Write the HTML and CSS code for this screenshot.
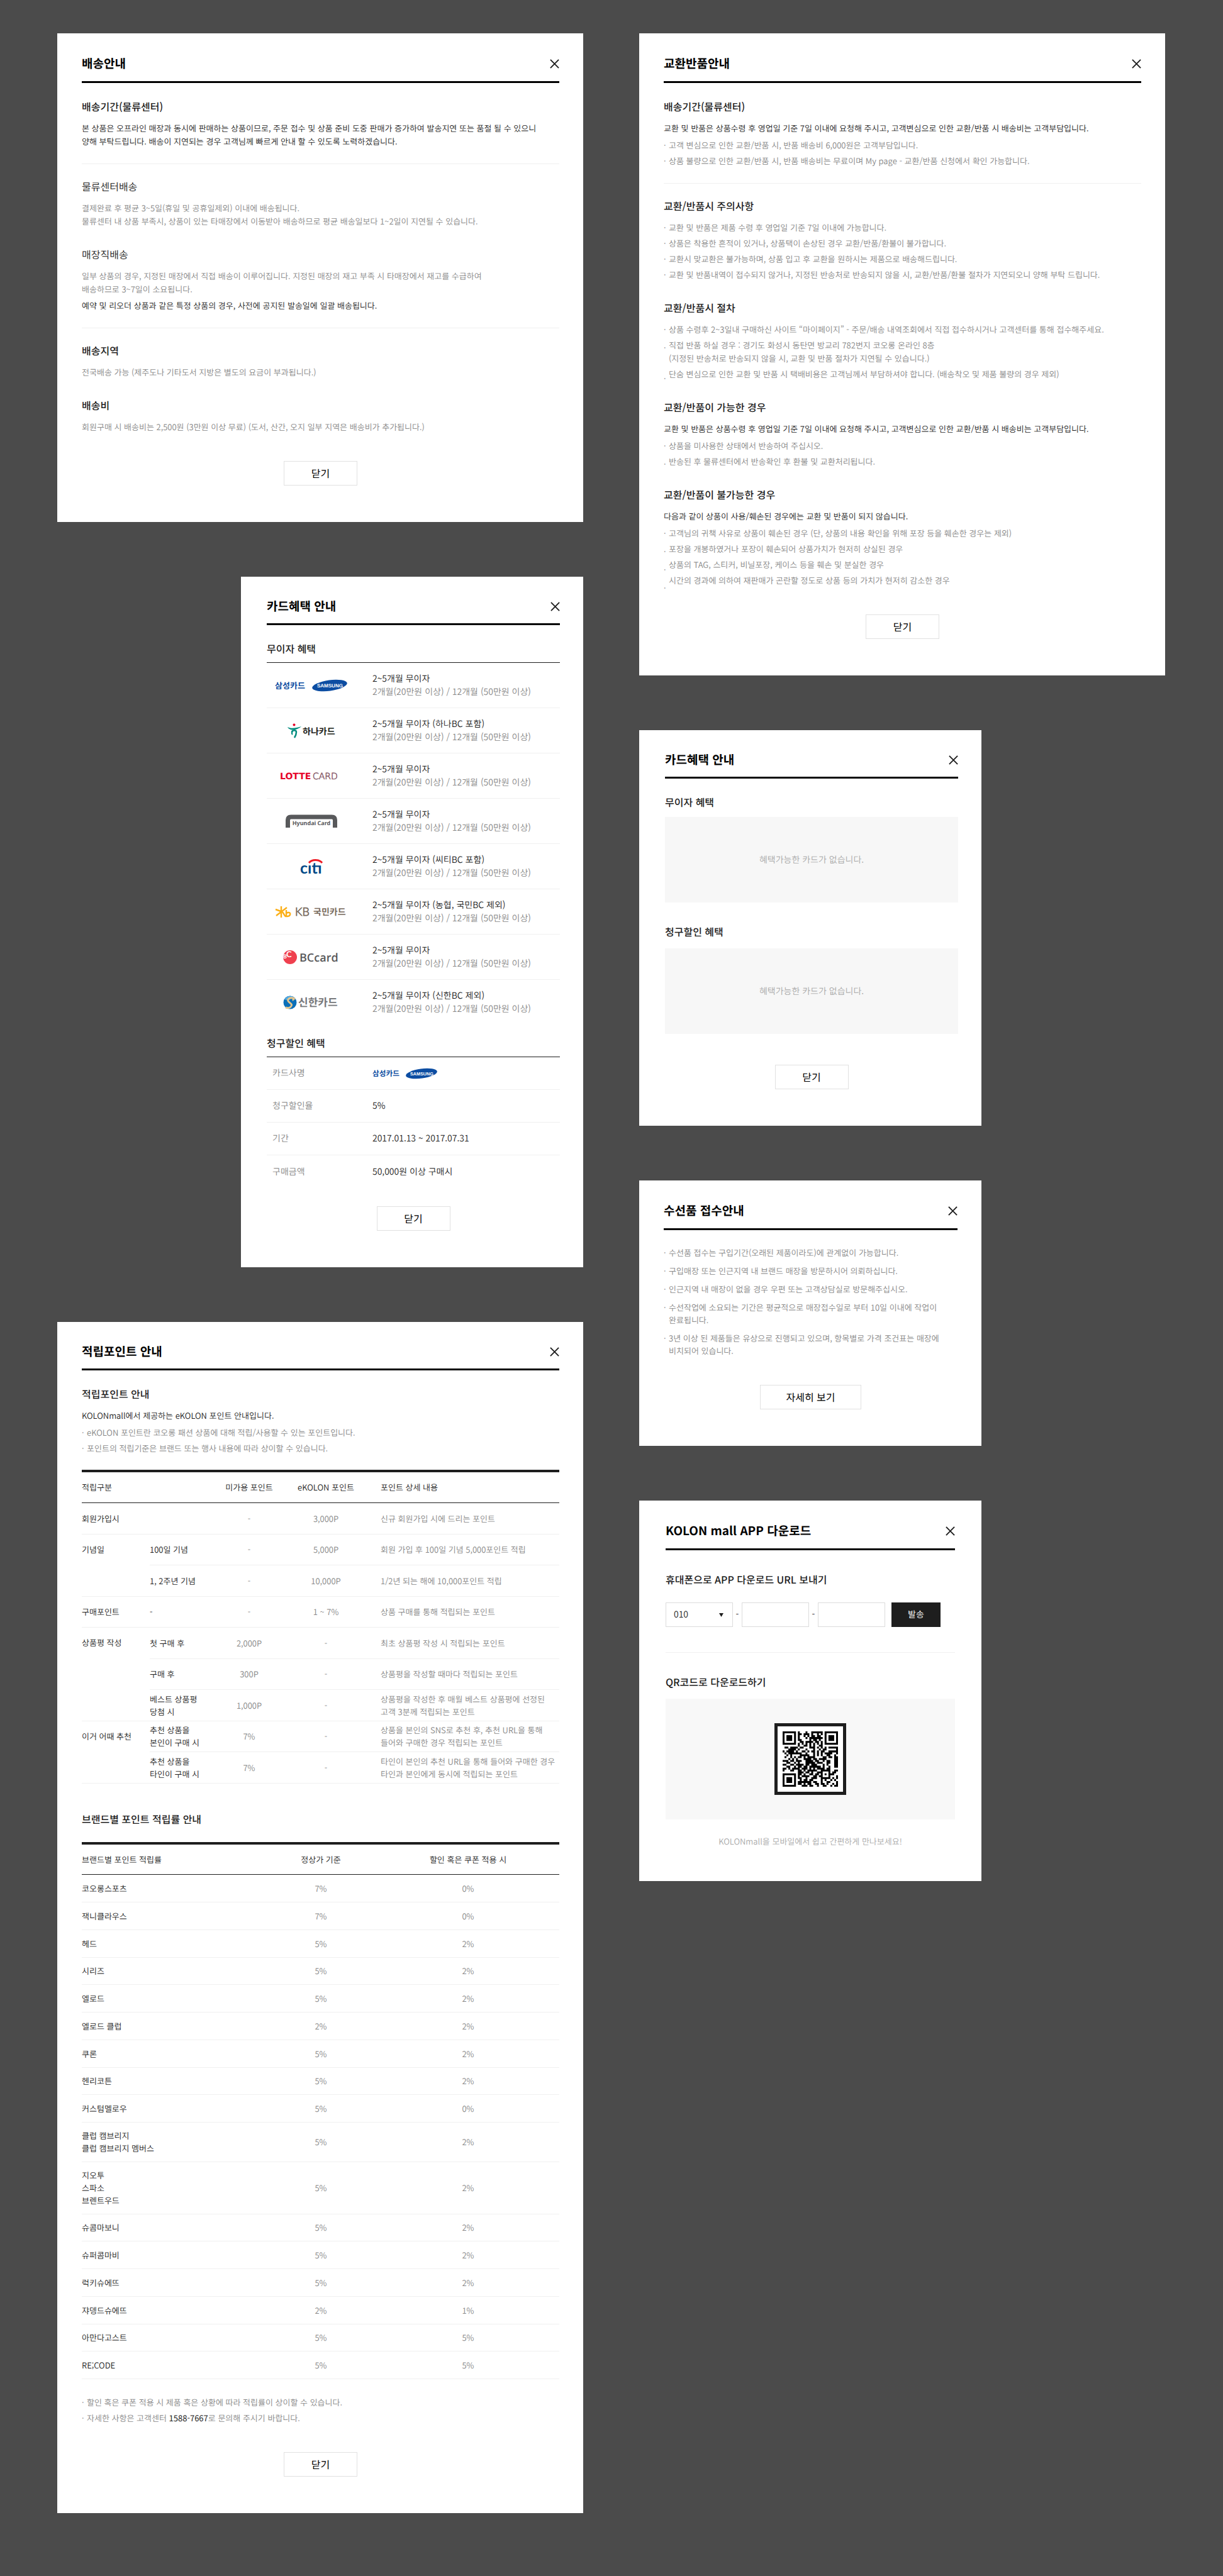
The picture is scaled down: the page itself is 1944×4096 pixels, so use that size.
FILE: index.html
```html
<!DOCTYPE html>
<html lang="ko">
<head>
<meta charset="utf-8">
<meta name="viewport" content="width=device-width, initial-scale=1">
<title>KOLON mall 안내 팝업</title>
<link rel="stylesheet" href="styles.css">
</head>
<body>
<svg class="defs" aria-hidden="true">
  <symbol id="icon-close" viewBox="0 0 16 16"><path d="M1 1l14 14M15 1L1 15" fill="none" stroke="#1e1e1e" stroke-width="2"/></symbol>
  <symbol id="logo-samsung" viewBox="0 0 116 24">
    <text x="0" y="17" font-family="Noto Sans CJK KR, sans-serif" font-weight="700" font-size="13" fill="#0c4da2">삼성카드</text>
    <ellipse cx="87" cy="12" rx="28" ry="8.500" transform="rotate(-8 87 12)" fill="#0c4da2"/>
    <text x="67" y="15" font-family="Liberation Sans, sans-serif" font-weight="700" font-size="8" fill="#fff">SAMSUNG</text>
  </symbol>
</svg>
<main class="page">
  <div class="column">

    <section class="card">
      <header class="card-head"><h2>배송안내</h2><button class="close" type="button" aria-label="배송안내 닫기"><svg><use href="#icon-close"/></svg></button></header>
      <h3>배송기간(물류센터)</h3>
      <p class="strong">본 상품은 오프라인 매장과 동시에 판매하는 상품이므로, 주문 접수 및 상품 준비 도중 판매가 증가하여 발송지연 또는 품절 될 수 있으니<br>양해 부탁드립니다. 배송이 지연되는 경우 고객님께 빠르게 안내 할 수 있도록 노력하겠습니다.</p>
      <hr>
      <h4>물류센터배송</h4>
      <p>결제완료 후 평균 3~5일(휴일 및 공휴일제외) 이내에 배송됩니다.<br>물류센터 내 상품 부족시, 상품이 있는 타매장에서 이동받아 배송하므로 평균 배송일보다 1~2일이 지연될 수 있습니다.</p>
      <h4>매장직배송</h4>
      <p>일부 상품의 경우, 지정된 매장에서 직접 배송이 이루어집니다. 지정된 매장의 재고 부족 시 타매장에서 재고를 수급하여<br>배송하므로 3~7일이 소요됩니다.</p>
      <p class="strong">예약 및 리오더 상품과 같은 특정 상품의 경우, 사전에 공지된 발송일에 일괄 배송됩니다.</p>
      <hr>
      <h3>배송지역</h3>
      <p>전국배송 가능 (제주도나 기타도서 지방은 별도의 요금이 부과됩니다.)</p>
      <h3>배송비</h3>
      <p>회원구매 시 배송비는 2,500원 (3만원 이상 무료) (도서, 산간, 오지 일부 지역은 배송비가 추가됩니다.)</p>
      <div class="actions"><button class="btn" type="button">닫기</button></div>
    </section>

    <section class="card narrow compact">
      <header class="card-head"><h2>카드혜택 안내</h2><button class="close" type="button" aria-label="카드혜택 안내 닫기"><svg><use href="#icon-close"/></svg></button></header>
      <h3>무이자 혜택</h3>
      <table class="benefit">
        <tr><th scope="row"><svg class="logo" role="img" aria-label="삼성카드" viewBox="0 0 116 24"><use href="#logo-samsung"/></svg></th><td>2~5개월 무이자<small>2개월(20만원 이상) / 12개월 (50만원 이상)</small></td></tr>
        <tr><th scope="row"><svg class="logo" role="img" aria-label="하나카드" viewBox="0 0 116 24">
          <circle cx="30.500" cy="2.500" r="2" fill="#e4002b"/>
          <path d="M20 6c5 3 13 2 22-1c-4 4-11 6-15 5.500c-3-.300-6-2-7-4.500z" fill="#008c7e"/>
          <path d="M27 14c0-3 7-4 7 0c0 4-1 6-3 9" fill="none" stroke="#008c7e" stroke-width="2.500"/>
          <path d="M28 13c-2 2-1 4 0 5" fill="none" stroke="#008c7e" stroke-width="2"/>
          <text x="44" y="18" font-family="Noto Sans CJK KR, sans-serif" font-weight="700" font-size="14" fill="#231f20">하나카드</text></svg></th><td>2~5개월 무이자 (하나BC 포함)<small>2개월(20만원 이상) / 12개월 (50만원 이상)</small></td></tr>
        <tr><th scope="row"><svg class="logo" role="img" aria-label="LOTTE CARD" viewBox="0 0 116 24">
          <text x="8" y="17" font-family="DejaVu Sans, sans-serif" font-weight="700" font-size="14" fill="#e60027">LOTTE</text>
          <text x="60" y="17" font-family="DejaVu Sans, sans-serif" font-size="14" fill="#8a5f6d" stroke="#8a5f6d" stroke-width=".600">CARD</text></svg></th><td>2~5개월 무이자<small>2개월(20만원 이상) / 12개월 (50만원 이상)</small></td></tr>
        <tr><th scope="row"><svg class="logo" role="img" aria-label="Hyundai Card" viewBox="0 0 116 24">
          <path d="M20.500 22V10q0-5 5-5h65q5 0 5 5V22" fill="none" stroke="#58595b" stroke-width="7"/>
          <text x="58" y="18" text-anchor="middle" font-family="Noto Sans, sans-serif" font-weight="700" font-size="9" fill="#58595b">Hyundai Card</text></svg></th><td>2~5개월 무이자<small>2개월(20만원 이상) / 12개월 (50만원 이상)</small></td></tr>
        <tr><th scope="row"><svg class="logo" role="img" aria-label="citi" viewBox="0 0 116 24">
          <text x="40" y="23" font-family="Lato, sans-serif" font-weight="700" font-size="25" fill="#004a87">cıtı</text>
          <path d="M54 6c5-6 16-6 21 0" fill="none" stroke="#ee1c25" stroke-width="3"/></svg></th><td>2~5개월 무이자 (씨티BC 포함)<small>2개월(20만원 이상) / 12개월 (50만원 이상)</small></td></tr>
        <tr><th scope="row"><svg class="logo" role="img" aria-label="KB 국민카드" viewBox="0 0 116 24">
          <path d="M1 8l11 4M10 3v18M19 5L2 18M11 12c3 0 3 6 6 7h3c5 0 6-7 1-6l-4 1M18 9v9" fill="none" stroke="#fbaf17" stroke-width="2.400"/>
          <text x="32" y="18" font-family="Lato, sans-serif" font-size="18" fill="#7a6c60" stroke="#7a6c60" stroke-width=".800">KB</text>
          <text x="61" y="17" font-family="Noto Sans CJK KR, sans-serif" font-weight="700" font-size="14" fill="#7a6c60">국민카드</text></svg></th><td>2~5개월 무이자 (농협, 국민BC 제외)<small>2개월(20만원 이상) / 12개월 (50만원 이상)</small></td></tr>
        <tr><th scope="row"><svg class="logo" role="img" aria-label="BC card" viewBox="0 0 116 24">
          <circle cx="24" cy="12" r="11" fill="#ef404f"/>
          <text x="13" y="14" font-family="Lato, sans-serif" font-weight="700" font-size="9" fill="#fff">B</text>
          <text x="18" y="12" font-family="Lato, sans-serif" font-weight="700" font-size="13" fill="#fff">C</text>
          <text x="39" y="19" font-family="Open Sans, sans-serif" font-weight="600" font-size="18" fill="#58595b">BCcard</text></svg></th><td>2~5개월 무이자<small>2개월(20만원 이상) / 12개월 (50만원 이상)</small></td></tr>
        <tr><th scope="row"><svg class="logo" role="img" aria-label="신한카드" viewBox="0 0 116 24">
          <circle cx="24" cy="12" r="10.500" fill="#0b6fb8"/><path d="M15 7a10.500 10.500 0 0 1 14-4l-8 6z" fill="#54a9df"/>
          <path d="M31 6c-7-3-13 1-9 5c3 3 7 4 3 8c-2 2-5 2-8 1" fill="none" stroke="#e3c58d" stroke-width="3"/>
          <path d="M27 3l6 3l-5 4z" fill="#e3c58d"/>
          <text x="37" y="18" font-family="Noto Sans CJK KR, sans-serif" font-weight="700" font-size="17" fill="#77787b">신한카드</text></svg></th><td>2~5개월 무이자 (신한BC 제외)<small>2개월(20만원 이상) / 12개월 (50만원 이상)</small></td></tr>
      </table>
      <h3>청구할인 혜택</h3>
      <table class="benefit discount">
        <tr><th scope="row">카드사명</th><td><svg class="logo small" role="img" aria-label="삼성카드" viewBox="0 0 116 24"><use href="#logo-samsung"/></svg></td></tr>
        <tr><th scope="row">청구할인율</th><td>5%</td></tr>
        <tr><th scope="row">기간</th><td>2017.01.13 ~ 2017.07.31</td></tr>
        <tr><th scope="row">구매금액</th><td>50,000원 이상 구매시</td></tr>
      </table>
      <div class="actions"><button class="btn" type="button">닫기</button></div>
    </section>

    <section class="card compact">
      <header class="card-head"><h2>적립포인트 안내</h2><button class="close" type="button" aria-label="적립포인트 안내 닫기"><svg><use href="#icon-close"/></svg></button></header>
      <h3>적립포인트 안내</h3>
      <p class="strong">KOLONmall에서 제공하는 eKOLON 포인트 안내입니다.</p>
      <ul class="notes">
        <li>eKOLON 포인트란 코오롱 패션 상품에 대해 적립/사용할 수 있는 포인트입니다.</li>
        <li>포인트의 적립기준은 브랜드 또는 행사 내용에 따라 상이할 수 있습니다.</li>
      </ul>
      <table class="grid points">
        <colgroup><col class="c-group"><col class="c-case"><col class="c-point"><col class="c-point"><col></colgroup>
        <thead><tr><th colspan="2" scope="col">적립구분</th><th scope="col" class="num">미가용 포인트</th><th scope="col" class="num">eKOLON 포인트</th><th scope="col" class="desc">포인트 상세 내용</th></tr></thead>
        <tbody>
          <tr><th colspan="2" scope="row">회원가입시</th><td class="num">-</td><td class="num">3,000P</td><td class="desc">신규 회원가입 시에 드리는 포인트</td></tr>
          <tr><th rowspan="2" scope="rowgroup" class="group">기념일</th><th scope="row">100일 기념</th><td class="num">-</td><td class="num">5,000P</td><td class="desc">회원 가입 후 100일 기념 5,000포인트 적립</td></tr>
          <tr><th scope="row">1, 2주년 기념</th><td class="num">-</td><td class="num">10,000P</td><td class="desc">1/2년 되는 해에 10,000포인트 적립</td></tr>
          <tr><th scope="row">구매포인트</th><th>-</th><td class="num">-</td><td class="num">1 ~ 7%</td><td class="desc">상품 구매를 통해 적립되는 포인트</td></tr>
          <tr><th rowspan="3" scope="rowgroup" class="group">상품평 작성</th><th scope="row">첫 구매 후</th><td class="num">2,000P</td><td class="num">-</td><td class="desc">최초 상품평 작성 시 적립되는 포인트</td></tr>
          <tr><th scope="row">구매 후</th><td class="num">300P</td><td class="num">-</td><td class="desc">상품평을 작성할 때마다 적립되는 포인트</td></tr>
          <tr><th scope="row">베스트 상품평<br>당첨 시</th><td class="num">1,000P</td><td class="num">-</td><td class="desc">상품평을 작성한 후 매월 베스트 상품평에 선정된<br>고객 3분께 적립되는 포인트</td></tr>
          <tr><th rowspan="2" scope="rowgroup" class="group">이거 어때 추천</th><th scope="row">추천 상품을<br>본인이 구매 시</th><td class="num">7%</td><td class="num">-</td><td class="desc">상품을 본인의 SNS로 추천 후, 추천 URL을 통해<br>들어와 구매한 경우 적립되는 포인트</td></tr>
          <tr><th scope="row">추천 상품을<br>타인이 구매 시</th><td class="num">7%</td><td class="num">-</td><td class="desc">타인이 본인의 추천 URL을 통해 들어와 구매한 경우<br>타인과 본인에게 동시에 적립되는 포인트</td></tr>
        </tbody>
      </table>
      <h3>브랜드별 포인트 적립률 안내</h3>
      <table class="grid rates">
        <colgroup><col class="c-brand"><col class="c-rate"><col></colgroup>
        <thead><tr><th scope="col">브랜드별 포인트 적립률</th><th scope="col" class="num">정상가 기준</th><th scope="col" class="num last">할인 혹은 쿠폰 적용 시</th></tr></thead>
        <tbody>
          <tr><th scope="row">코오롱스포츠</th><td class="num">7%</td><td class="num last">0%</td></tr>
          <tr><th scope="row">잭니클라우스</th><td class="num">7%</td><td class="num last">0%</td></tr>
          <tr><th scope="row">헤드</th><td class="num">5%</td><td class="num last">2%</td></tr>
          <tr><th scope="row">시리즈</th><td class="num">5%</td><td class="num last">2%</td></tr>
          <tr><th scope="row">엘로드</th><td class="num">5%</td><td class="num last">2%</td></tr>
          <tr><th scope="row">엘로드 클럽</th><td class="num">2%</td><td class="num last">2%</td></tr>
          <tr><th scope="row">쿠론</th><td class="num">5%</td><td class="num last">2%</td></tr>
          <tr><th scope="row">헨리코튼</th><td class="num">5%</td><td class="num last">2%</td></tr>
          <tr><th scope="row">커스텀멜로우</th><td class="num">5%</td><td class="num last">0%</td></tr>
          <tr class="multi"><th scope="row">클럽 캠브리지<br>클럽 캠브리지 멤버스</th><td class="num">5%</td><td class="num last">2%</td></tr>
          <tr class="multi"><th scope="row">지오투<br>스파소<br>브렌트우드</th><td class="num">5%</td><td class="num last">2%</td></tr>
          <tr><th scope="row">슈콤마보니</th><td class="num">5%</td><td class="num last">2%</td></tr>
          <tr><th scope="row">슈퍼콤마비</th><td class="num">5%</td><td class="num last">2%</td></tr>
          <tr><th scope="row">럭키슈에뜨</th><td class="num">5%</td><td class="num last">2%</td></tr>
          <tr><th scope="row">쟈뎅드슈에뜨</th><td class="num">2%</td><td class="num last">1%</td></tr>
          <tr><th scope="row">아만다고스트</th><td class="num">5%</td><td class="num last">5%</td></tr>
          <tr><th scope="row">RE;CODE</th><td class="num">5%</td><td class="num last">5%</td></tr>
        </tbody>
      </table>
      <ul class="notes foot">
        <li>할인 혹은 쿠폰 적용 시 제품 혹은 상황에 따라 적립률이 상이할 수 있습니다.</li>
        <li>자세한 사항은 고객센터 <b>1588-7667</b>로 문의해 주시기 바랍니다.</li>
      </ul>
      <div class="actions"><button class="btn" type="button">닫기</button></div>
    </section>
  </div>

  <div class="column right">

    <section class="card">
      <header class="card-head"><h2>교환반품안내</h2><button class="close" type="button" aria-label="교환반품안내 닫기"><svg><use href="#icon-close"/></svg></button></header>
      <h3>배송기간(물류센터)</h3>
      <p class="strong">교환 및 반품은 상품수령 후 영업일 기준 7일 이내에 요청해 주시고, 고객변심으로 인한 교환/반품 시 배송비는 고객부담입니다.</p>
      <ul class="notes">
        <li>고객 변심으로 인한 교환/반품 시, 반품 배송비 6,000원은 고객부담입니다.</li>
        <li>상품 불량으로 인한 교환/반품 시, 반품 배송비는 무료이며 My page - 교환/반품 신청에서 확인 가능합니다.</li>
      </ul>
      <hr>
      <h3>교환/반품시 주의사항</h3>
      <ul class="notes first">
        <li>교환 및 반품은 제품 수령 후 영업일 기준 7일 이내에 가능합니다.</li>
        <li>상품은 착용한 흔적이 있거나, 상품택이 손상된 경우 교환/반품/환불이 불가합니다.</li>
        <li>교환시 맞교환은 불가능하며, 상품 입고 후 교환을 원하시는 제품으로 배송해드립니다.</li>
        <li>교환 및 반품내역이 접수되지 않거나, 지정된 반송처로 반송되지 않을 시, 교환/반품/환불 절차가 지연되오니 양해 부탁 드립니다.</li>
      </ul>
      <h3>교환/반품시 절차</h3>
      <div class="marked first">
        <div class="marks" aria-hidden="true"><span>·</span><span>·</span><span class="skip">·</span></div>
        <ul class="notes plain">
          <li>상품 수령후 2~3일내 구매하신 사이트 “마이페이지” - 주문/배송 내역조회에서 직접 접수하시거나 고객센터를 통해 접수해주세요.</li>
          <li>직접 반품 하실 경우 : 경기도 화성시 동탄면 방교리 782번지 코오롱 온라인 8층<br>(지정된 반송처로 반송되지 않을 시, 교환 및 반품 절차가 지연될 수 있습니다.)</li>
          <li>단숨 변심으로 인한 교환 및 반품 시 택배비용은 고객님께서 부담하셔야 합니다. (배송착오 및 제품 불량의 경우 제외)</li>
        </ul>
      </div>
      <h3>교환/반품이 가능한 경우</h3>
      <p class="strong">교환 및 반품은 상품수령 후 영업일 기준 7일 이내에 요청해 주시고, 고객변심으로 인한 교환/반품 시 배송비는 고객부담입니다.</p>
      <div class="marked">
        <div class="marks" aria-hidden="true"><span>·</span><span>·</span></div>
        <ul class="notes plain">
          <li>상품을 미사용한 상태에서 반송하여 주십시오.</li>
          <li>반송된 후 물류센터에서 반송확인 후 환불 및 교환처리됩니다.</li>
        </ul>
      </div>
      <h3>교환/반품이 불가능한 경우</h3>
      <p class="strong">다음과 같이 상품이 사용/훼손된 경우에는 교환 및 반품이 되지 않습니다.</p>
      <div class="marked">
        <div class="marks" aria-hidden="true"><span>·</span><span>·</span><span>·</span><span>·</span></div>
        <ul class="notes plain">
          <li>고객님의 귀책 사유로 상품이 훼손된 경우 (단, 상품의 내용 확인을 위해 포장 등을 훼손한 경우는 제외)</li>
          <li>포장을 개봉하였거나 포장이 훼손되어 상품가치가 현저히 상실된 경우</li>
          <li>상품의 TAG, 스티커, 비닐포장, 케이스 등을 훼손 및 분실한 경우</li>
          <li>시간의 경과에 의하여 재판매가 곤란할 정도로 상품 등의 가치가 현저히 감소한 경우</li>
        </ul>
      </div>
      <div class="actions"><button class="btn" type="button">닫기</button></div>
    </section>

    <section class="card narrow compact">
      <header class="card-head"><h2>카드혜택 안내</h2><button class="close" type="button" aria-label="카드혜택 안내 닫기"><svg><use href="#icon-close"/></svg></button></header>
      <h3>무이자 혜택</h3>
      <p class="empty">혜택가능한 카드가 없습니다.</p>
      <h3>청구할인 혜택</h3>
      <p class="empty">혜택가능한 카드가 없습니다.</p>
      <div class="actions"><button class="btn" type="button">닫기</button></div>
    </section>

    <section class="card narrow repair">
      <header class="card-head"><h2>수선품 접수안내</h2><button class="close" type="button" aria-label="수선품 접수안내 닫기"><svg><use href="#icon-close"/></svg></button></header>
      <ul class="notes loose">
        <li>수선품 접수는 구입기간(오래된 제품이라도)에 관계없이 가능합니다.</li>
        <li>구입매장 또는 인근지역 내 브랜드 매장을 방문하시어 의뢰하십니다.</li>
        <li>인근지역 내 매장이 없을 경우 우편 또는 고객상담실로 방문해주십시오.</li>
        <li>수선작업에 소요되는 기간은 평균적으로 매장접수일로 부터 10일 이내에 작업이<br>완료됩니다.</li>
        <li>3년 이상 된 제품들은 유상으로 진행되고 있으며, 항목별로 가격 조건표는 매장에<br>비치되어 있습니다.</li>
      </ul>
      <div class="actions"><button class="btn wide" type="button">자세히 보기</button></div>
    </section>

    <section class="card narrow app">
      <header class="card-head"><h2>KOLON mall APP 다운로드</h2><button class="close" type="button" aria-label="APP 다운로드 닫기"><svg><use href="#icon-close"/></svg></button></header>
      <h3>휴대폰으로 APP 다운로드 URL 보내기</h3>
      <form class="phone">
        <div class="select">
          <select aria-label="휴대폰 앞자리"><option>010</option></select>
          <svg viewBox="0 0 7 6" aria-hidden="true"><path d="M0 0h7L3.500 6z" fill="#1e1e1e"/></svg>
        </div>
        <span>-</span>
        <input type="tel" aria-label="휴대폰 가운데 자리">
        <span>-</span>
        <input type="tel" aria-label="휴대폰 끝자리">
        <button class="send" type="button">발송</button>
      </form>
      <hr>
      <h3>QR코드로 다운로드하기</h3>
      <div class="qr-box"><svg class="qr" role="img" aria-label="앱 다운로드 QR코드" viewBox="0 0 29 29" shape-rendering="geometricPrecision"></svg></div>
      <p class="hint">KOLONmall을 모바일에서 쉽고 간편하게 만나보세요!</p>
    </section>
  </div>
</main>
<script src="qr.js"></script>
</body>
</html>
```

FILE: styles.css
```css
* { box-sizing: border-box; }

body {
  margin: 0;
  background: #4b4b4b;
  color: #1e1e1e;
  font: 350 13px/21px "Noto Sans CJK KR", sans-serif;
  text-rendering: geometricPrecision;
}

h2, h3, h4, p, ul, table { margin: 0; padding: 0; }
ul { list-style: none; }
button, input, select { font: inherit; color: inherit; border-radius: 0; text-rendering: inherit; }
.defs { display: none; }

.page {
  display: grid;
  grid-template-columns: minmax(0, 1fr) minmax(0, 1fr);
  column-gap: 89px;
  padding: 53px 92px 98px 91px;
}
.column { display: flex; flex-direction: column; align-items: flex-end; gap: 87px; }
.right { align-items: flex-start; }

/* cards */
.card {
  width: 100%;
  padding: 34px 38px 58px 39px;
  background: #fff;
  white-space: nowrap;
}
.narrow { max-width: 544px; }
.compact { padding-top: 33px; }
.narrow.compact { padding-left: 41px; padding-right: 37px; font-size: 14px; }

.card-head {
  display: flex;
  justify-content: space-between;
  align-items: center;
  padding-bottom: 14px;
  border-bottom: 3px solid #000;
  margin-bottom: 26px;
}
.compact .card-head { padding-bottom: 13px; }
h2 { font-size: 19px; line-height: 28px; font-weight: 700; color: #000; }
h3, h4 { margin-top: 31px; font-size: 16px; line-height: 23px; font-weight: 500; }
h4 { font-weight: 350; }
.card-head + h3 { margin-top: 0; }
.close { width: 15px; height: 15px; padding: 0; border: 0; background: none; display: flex; cursor: pointer; }
.close svg { width: 15px; height: 15px; }

p, .notes { color: #888; }
h3 + p, h4 + p, .first { margin-top: 12px; }
.strong { color: #1e1e1e; }
p + .strong { margin-top: 5px; }
hr { height: 1px; margin: 25px 0 24px; border: 0; background: #f0f0f0; }
hr + h3, hr + h4 { margin-top: 0; }

/* bulleted notes */
p + .notes, p + .marked { margin-top: 6px; }
.notes li { padding-left: 8px; }
.notes li::before { content: "·"; display: inline-block; width: 8px; margin-left: -8px; }
.notes li + li { margin-top: 4px; }
.notes b { color: #1e1e1e; font-weight: 400; }
.loose { line-height: 20px; }
.loose li + li { margin-top: 9px; }
.foot { margin-top: 26px; }
.marked { display: grid; grid-template-columns: 8px 1fr; color: #888; }
.marks { display: flex; flex-direction: column; height: 0; }
.marks span { flex: none; height: 29px; }
.marks .skip { margin-top: 20px; }
.plain li { padding-left: 0; }
.plain li::before { content: none; }

/* buttons */
.actions { display: flex; justify-content: center; margin-top: 44px; }
.btn {
  width: 117px;
  height: 39px;
  padding: 0;
  border: 1px solid #e1e1e1;
  background: #fff;
  color: #000;
  font-weight: 400;
  font-size: 16px;
  cursor: pointer;
}
.btn.wide { width: 161px; }

/* tables */
table { width: 100%; border-collapse: separate; border-spacing: 0; table-layout: fixed; }
th, td { padding: 0; text-align: left; vertical-align: middle; font-weight: 350; }

.benefit { margin-top: 10px; border-top: 1px solid #1e1e1e; }
.benefit th, .benefit td { height: 72px; border-bottom: 1px solid #f0f0f0; }
.benefit tr:last-child > * { border-bottom: 0; }
.benefit th { width: 168px; padding-right: 26px; text-align: center; }
.benefit small { display: block; font-size: 14px; color: #888; }
.logo { display: block; width: 116px; height: 24px; margin: 0 auto; overflow: visible; }
.logo.small { width: 104px; height: 22px; margin: 0; }
.benefit + h3 { margin-top: 17px; }
.benefit.discount th, .benefit.discount td { height: 52px; }
.benefit.discount th { padding: 0 0 0 9px; text-align: left; color: #888; }
.discount + .actions { margin-top: 29px; }

.grid { border-top: 4px solid #1e1e1e; line-height: 20px; }
.grid th, .grid td { border-bottom: 1px solid #f0f0f0; }
.grid td { color: #888; }
.grid thead th { height: 49px; border-bottom-color: #1e1e1e; }
.grid .num { text-align: center; }
.grid .desc { padding-left: 26px; }
.points { margin-top: 24px; }
.points tbody tr { height: 50px; }
.points tbody tr:nth-child(even) { height: 49px; }
.points .group { padding-top: 14px; vertical-align: top; }
.c-group { width: 108px; }
.c-case { width: 97px; }
.c-point { width: 122px; }
.points + h3 { margin-top: 45px; }
.rates { margin-top: 25px; }
.grid.rates thead th { height: 48px; }
.c-brand { width: 263px; }
.c-rate { width: 234px; }
.rates .last { padding-right: 28px; }
.rates tbody tr { height: 44px; }
.rates tbody tr:nth-child(4n) { height: 43px; }
.rates tbody .multi th { padding: 11px 0; }

/* empty state */
.empty {
  display: grid;
  place-items: center;
  height: 136px;
  background: #f7f7f7;
  color: #aaa;
}
h3 + .empty { margin-top: 12px; }
.empty + h3 { margin-top: 35px; }
.empty + h3 + .empty { margin-top: 15px; }
.empty + .actions { margin-top: 49px; }

/* app download */
.app { padding: 34px 42px 53px; }
.app .card-head { margin-bottom: 35px; }
.app hr { margin: 40px 0 35px; }
.phone { display: flex; align-items: center; margin-top: 25px; font-size: 14px; }
.phone span { width: 14px; text-align: center; }
.phone input, .phone select {
  width: 107px;
  height: 39px;
  padding: 0 12px;
  border: 1px solid #dcdcdc;
  background: #fff;
}
.phone select { appearance: none; grid-area: 1 / 1; }
.select { display: grid; align-items: center; }
.select svg { grid-area: 1 / 1; justify-self: end; width: 7px; height: 6px; margin-right: 15px; pointer-events: none; }
.send { width: 78px; height: 39px; margin-left: 10px; padding: 0; border: 0; background: #1e1e1e; color: #fff; cursor: pointer; }
.qr-box { display: grid; place-items: center; height: 192px; margin-top: 15px; background: #f8f8f8; }
.qr { width: 114px; height: 114px; padding: 8px; border: 5px solid #1e1e1e; background: #fff; }
.hint { margin-top: 24px; color: #aaa; text-align: center; }
```

FILE: qr.js
```js
// Dark modules of the download link's QR code, one string per row.
const rows = [
  "11111110100010011111101111111",
  "10000010110111010010101000001",
  "10111010100101011011001011101",
  "10111010100010111111101011101",
  "10111010110000101101001011101",
  "10000010011011110110101000001",
  "11111110101010101010101111111",
  "00000000100110101001100000000",
  "01101111011000111010101011111",
  "00011110100010001001011000001",
  "10111101001101011010110011111",
  "01011111110010001010101111001",
  "00101000011111001010100110010",
  "01001010110101111000011011011",
  "00010101000111101101111000011",
  "11101101110011110110010110011",
  "00110010100011111011100110011",
  "11001101111011011100010100011",
  "00110010110110111111010010011",
  "11010111101110101011110110000",
  "10001100110101111100111110011",
  "00000000111011010011100010110",
  "11111110110100110110101011100",
  "10000010101111001101100010001",
  "10111010110010011100111110101",
  "10111010010110110000101001010",
  "10111010111111101100100110001",
  "10000010110101100110110100101",
  "11111110001110110010011001011"
];
const ns = "http://www.w3.org/2000/svg";
const path = document.createElementNS(ns, "path");
let d = "";
rows.forEach((row, y) => {
  for (const run of row.matchAll(/1+/g)) {
    d += `M${run.index} ${y}h${run[0].length}v1h-${run[0].length}z`;
  }
});
path.setAttribute("d", d);
document.querySelector(".qr").append(path);
```
